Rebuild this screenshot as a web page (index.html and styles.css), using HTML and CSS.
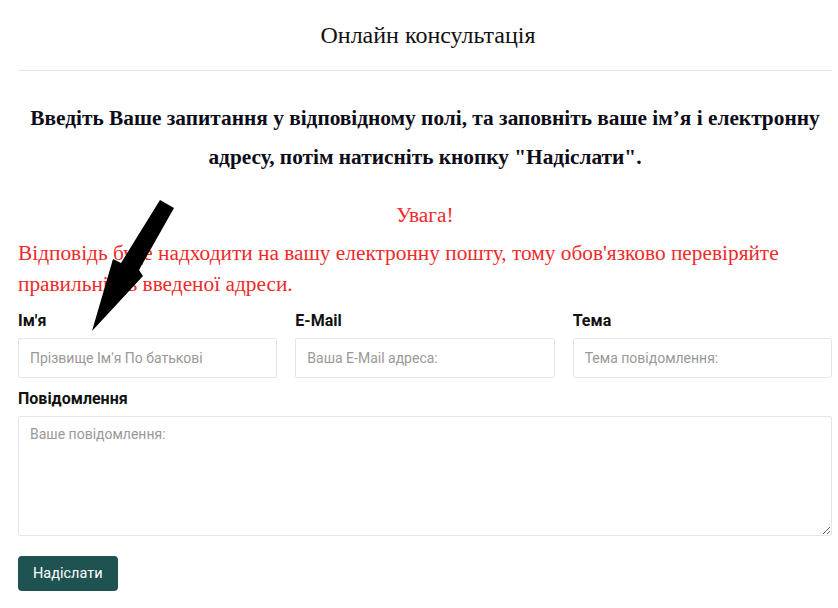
FILE: index.html
```html
<!DOCTYPE html>
<html lang="uk">
<head>
<meta charset="utf-8">
<title>Онлайн консультація</title>
<link rel="stylesheet" href="styles.css">
</head>
<body>
<div class="page">
  <div class="head">
    <h1 class="title">Онлайн консультація</h1>
  </div>
  <p class="intro">Введіть Ваше запитання у відповідному полі, та заповніть ваше ім’я і електронну адресу, потім натисніть кнопку "Надіслати".</p>
  <p class="warn-title">Увага!</p>
  <p class="warn-text">Відповідь буде надходити на вашу електронну пошту, тому обов'язково перевіряйте правильність введеної адреси.</p>
  <form class="form">
    <div class="row">
      <div class="field">
        <label class="label">Ім'я</label>
        <input class="input" type="text" placeholder="Прізвище Ім'я По батькові">
      </div>
      <div class="field">
        <label class="label">E-Mail</label>
        <input class="input" type="text" placeholder="Ваша E-Mail адреса:">
      </div>
      <div class="field">
        <label class="label">Тема</label>
        <input class="input" type="text" placeholder="Тема повідомлення:">
      </div>
    </div>
    <div class="field">
      <label class="label">Повідомлення</label>
      <textarea class="textarea" placeholder="Ваше повідомлення:"></textarea>
    </div>
    <div class="actions">
      <button class="btn" type="button">Надіслати</button>
    </div>
  </form>
  <svg class="arrow" width="838" height="608" viewBox="0 0 838 608">
    <polygon points="160,200 174,208 139,270 143,276 92,331 113,259 121,263" fill="#000"/>
  </svg>
</div>
</body>
</html>
```
FILE: styles.css
```css
html, body {
  margin: 0;
  padding: 0;
  background: #fff;
}
.page {
  position: relative;
  width: 814px;
  margin-left: 18px;
  font-family: "Liberation Serif", "Times New Roman", serif;
}
.head {
  border-bottom: 1px solid #e6e6e6;
  padding: 22px 0 22px;
  text-align: center;
}
.title {
  margin: 0;
  font-size: 24px;
  font-weight: normal;
  line-height: 26px;
  color: #111;
  padding-left: 6px;
}
.intro {
  margin: 28px 0 0;
  text-align: center;
  font-weight: bold;
  font-size: 21.33px;
  line-height: 39px;
  color: #0d0d1a;
}
.warn-title {
  margin: 23px 0 0;
  text-align: center;
  color: #ee2a2a;
  font-size: 21.33px;
  line-height: 30px;
}
.warn-text {
  margin: 8px 0 0;
  color: #ee2a2a;
  font-size: 21.33px;
  line-height: 31px;
}
.form {
  margin-top: 11px;
  font-family: Roboto, "Liberation Sans", sans-serif;
}
.row {
  display: grid;
  grid-template-columns: repeat(3, 1fr);
  column-gap: 18px;
}
.field {
  display: flex;
  flex-direction: column;
}
.label {
  font-weight: bold;
  font-size: 16px;
  line-height: 19px;
  color: #111;
  margin-bottom: 8px;
}
.input, .textarea {
  box-sizing: border-box;
  width: 100%;
  border: 1px solid #e6e6e6;
  border-radius: 2px;
  font-family: Roboto, "Liberation Sans", sans-serif;
  font-size: 14px;
  color: #333;
  outline: none;
}
.input {
  height: 40px;
  padding: 0 11px;
}
.row + .field {
  margin-top: 11px;
}
.textarea {
  height: 120px;
  padding: 9px 11px;
  resize: vertical;
}
.input::placeholder, .textarea::placeholder {
  color: #999;
}
.actions {
  margin-top: 20px;
}
.btn {
  background: #1f5351;
  color: #fff;
  border: none;
  border-radius: 4px;
  font-family: Roboto, "Liberation Sans", sans-serif;
  font-size: 14.5px;
  height: 35px;
  padding: 0 15px;
  cursor: pointer;
}
.arrow {
  position: absolute;
  left: -18px;
  top: 0;
  pointer-events: none;
}
```
